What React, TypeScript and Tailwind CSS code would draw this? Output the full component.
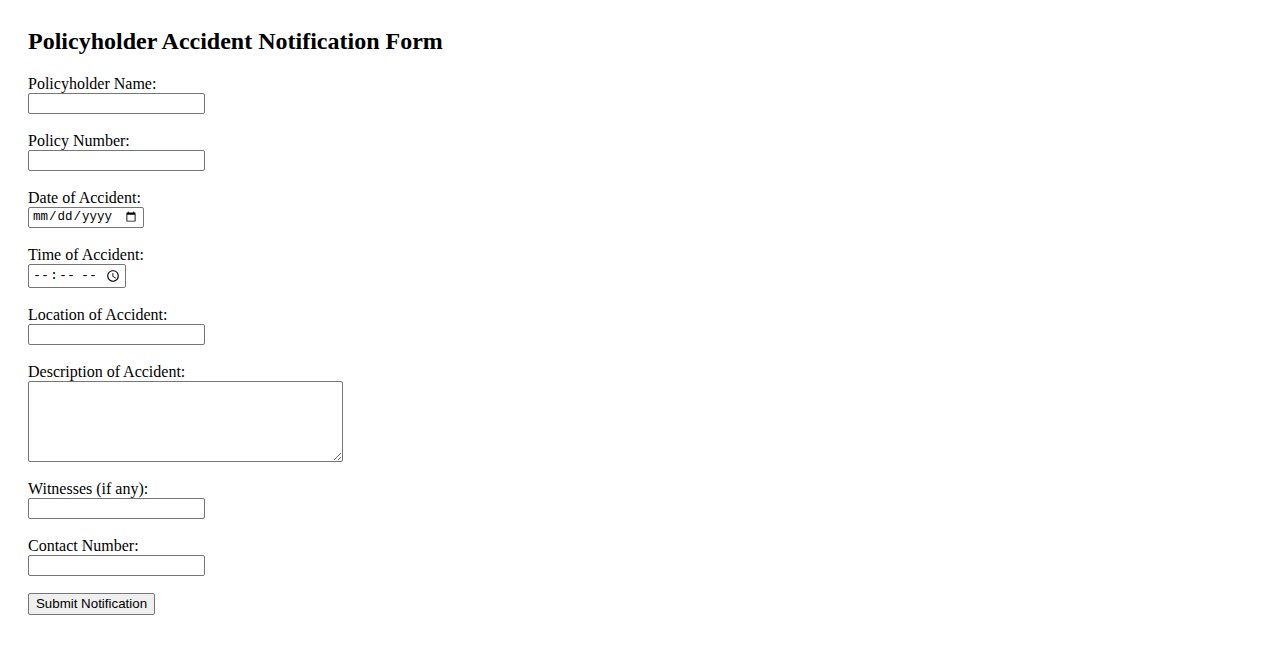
import React from "react";

const inputCls =
  "block w-[177px] h-[21px] border border-[#767676] rounded-[2px] bg-white px-[2px] text-[13.33px] font-['Liberation_Sans',Arial,sans-serif] outline-none";

const Field: React.FC<{ label: string; children: React.ReactNode }> = ({
  label,
  children,
}) => (
  <div className="mb-[17px]">
    <label className="block leading-[19px]">{label}</label>
    {children}
  </div>
);

const App: React.FC = () => {
  return (
    <div className="min-h-screen bg-white text-black font-['Liberation_Serif','Times_New_Roman',serif] text-[16px] px-[28px] pt-[27px]">
      <h2 className="text-[24px] font-bold leading-[28px] mb-[19px]">
        Policyholder Accident Notification Form
      </h2>
      <form onSubmit={(e) => e.preventDefault()}>
        <Field label="Policyholder Name:">
          <input type="text" className={inputCls} />
        </Field>
        <Field label="Policy Number:">
          <input type="text" className={inputCls} />
        </Field>
        <Field label="Date of Accident:">
          <input
            type="date"
            className="block w-[116px] h-[21px] border border-[#767676] rounded-[2px] bg-white pl-[3px] pr-[4px] text-[12.5px] font-['Liberation_Mono',monospace] outline-none"
          />
        </Field>
        <Field label="Time of Accident:">
          <input
            type="time"
            className="block w-[98px] h-[24px] border border-[#767676] rounded-[2px] bg-white pl-[3px] pr-[2px] text-[13.33px] font-['Liberation_Mono',monospace] outline-none"
          />
        </Field>
        <Field label="Location of Accident:">
          <input type="text" className={inputCls} />
        </Field>
        <Field label="Description of Accident:">
          <textarea className="block w-[315px] h-[81px] border border-[#767676] rounded-[2px] bg-white p-[2px] text-[13.33px] font-['Liberation_Mono',monospace] outline-none" />
        </Field>
        <Field label="Witnesses (if any):">
          <input type="text" className={inputCls} />
        </Field>
        <Field label="Contact Number:">
          <input type="text" className={inputCls} />
        </Field>
        <button
          type="submit"
          className="block h-[22px] w-[127px] border border-[#767676] rounded-[2px] bg-[#efefef] text-[13.33px] font-['Liberation_Sans',Arial,sans-serif] text-black leading-none"
        >
          Submit Notification
        </button>
      </form>
    </div>
  );
};

export default App;
